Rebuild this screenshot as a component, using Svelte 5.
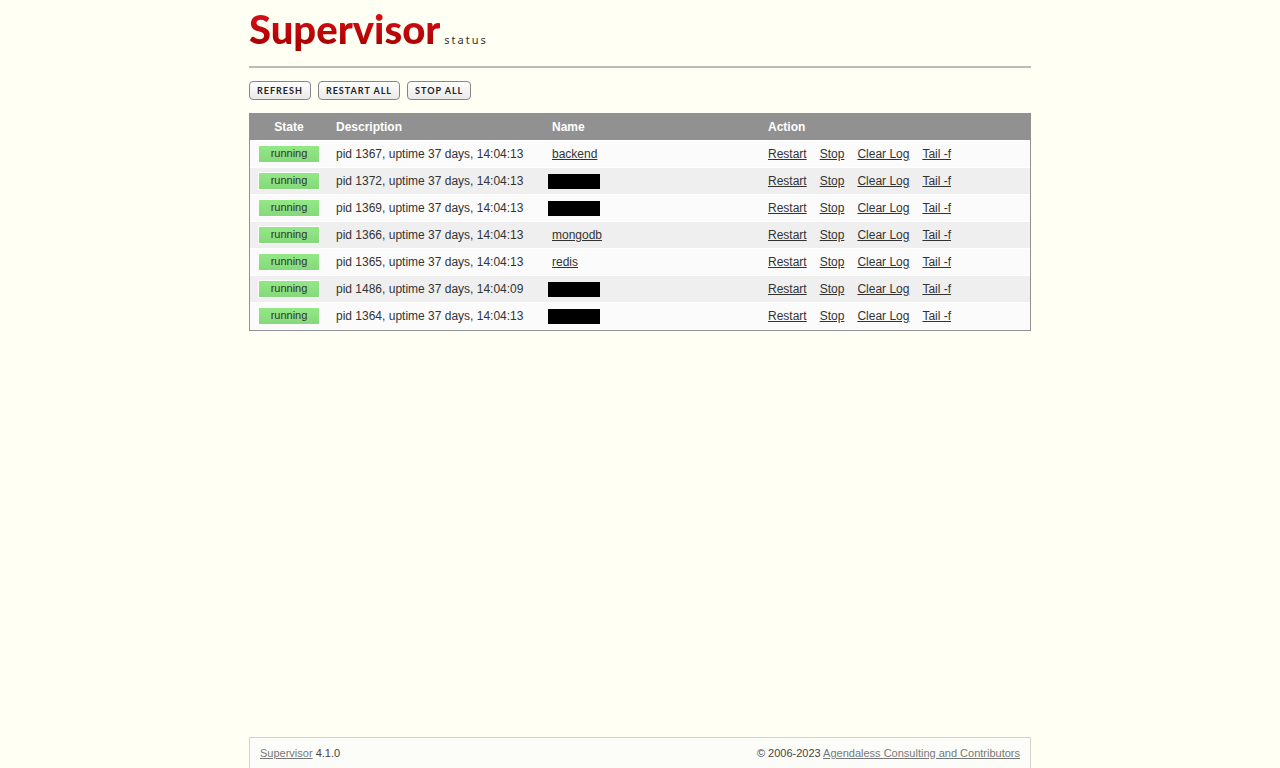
<script lang="ts">
	type Process = {
		pid: number;
		uptime: string;
		name: string;
	};

	const processes: Process[] = [
		{ pid: 1367, uptime: '37 days, 14:04:13', name: 'backend' },
		{ pid: 1372, uptime: '37 days, 14:04:13', name: '' },
		{ pid: 1369, uptime: '37 days, 14:04:13', name: '' },
		{ pid: 1366, uptime: '37 days, 14:04:13', name: 'mongodb' },
		{ pid: 1365, uptime: '37 days, 14:04:13', name: 'redis' },
		{ pid: 1486, uptime: '37 days, 14:04:09', name: '' },
		{ pid: 1364, uptime: '37 days, 14:04:13', name: '' }
	];

	const buttons = ['Refresh', 'Restart All', 'Stop All'];
	const actions = ['Restart', 'Stop', 'Clear Log', 'Tail -f'];
</script>

<div class="wrapper">
	<header>
		<h1>
			<span class="brand">Supervisor</span>
			<span class="sub">status</span>
		</h1>
	</header>

	<main>
		<div class="buttons">
			{#each buttons as label (label)}
				<button type="button">{label}</button>
			{/each}
		</div>

		<table>
			<thead>
				<tr>
					<th class="state">State</th>
					<th class="desc">Description</th>
					<th class="name">Name</th>
					<th>Action</th>
				</tr>
			</thead>
			<tbody>
				{#each processes as process (process.pid)}
					<tr>
						<td class="state"><span class="status">running</span></td>
						<td>pid {process.pid}, uptime {process.uptime}</td>
						<td>
							{#if process.name}
								<a href="#tail">{process.name}</a>
							{:else}
								<span class="redacted"></span>
							{/if}
						</td>
						<td>
							<div class="actions">
								{#each actions as action (action)}
									<a href="#action">{action}</a>
								{/each}
							</div>
						</td>
					</tr>
				{/each}
			</tbody>
		</table>
	</main>

	<footer>
		<div><a href="#supervisor">Supervisor</a> 4.1.0</div>
		<div>© 2006-2023 <a href="#agendaless">Agendaless Consulting and Contributors</a></div>
	</footer>
</div>

<style>
	:global(body) {
		background: #fffff3;
		font-family: 'Liberation Sans', Arial, sans-serif;
		font-size: 12px;
		color: #333;
	}

	.wrapper {
		box-sizing: border-box;
		display: flex;
		flex-direction: column;
		max-width: 782px;
		min-height: 100vh;
		margin: 0 auto;
	}

	header {
		height: 66px;
		border-bottom: 2px solid #bbb;
	}

	h1 {
		display: flex;
		align-items: baseline;
		gap: 4px;
		margin: 0;
		padding-top: 5px;
		line-height: 48px;
	}

	.brand {
		font-family: Lato, sans-serif;
		font-size: 40px;
		font-weight: 900;
		color: transparent;
		background: linear-gradient(#e0101a 10%, #a80000 85%);
		background-clip: text;
	}

	.sub {
		font-family: 'Noto Sans', sans-serif;
		font-size: 11px;
		font-weight: 400;
		letter-spacing: 2px;
	}

	main {
		flex: 1;
	}

	.buttons {
		display: flex;
		gap: 7px;
		margin: 13px 0;
	}

	button {
		height: 19px;
		padding: 0 7px;
		border: 1px solid #858585;
		border-radius: 4px;
		background: linear-gradient(#fff, #e9e9e9);
		font-family: Lato, sans-serif;
		font-size: 9px;
		font-weight: 700;
		line-height: 17px;
		letter-spacing: 1px;
		text-transform: uppercase;
		color: #222;
		cursor: pointer;
	}

	table {
		width: 100%;
		table-layout: fixed;
		border: 1px solid #919191;
		border-spacing: 0;
	}

	th,
	td {
		box-sizing: border-box;
		padding: 0 8px;
		text-align: left;
	}

	th {
		height: 26px;
		background: #919191;
		color: #fff;
	}

	td {
		height: 27px;
		border-top: 1px solid #fff;
		background: #fbfbfb;
	}

	tbody tr:nth-child(even) td {
		background: #efefef;
	}

	tbody tr:last-child td {
		height: 28px;
		border-bottom: 1px solid #fff;
	}

	th.state,
	td.state {
		width: 78px;
		text-align: center;
	}

	.desc,
	.name {
		width: 216px;
	}

	.status {
		display: block;
		height: 16px;
		border: 1px solid #fff;
		background: linear-gradient(#93e886, #85d97a);
		font-size: 11px;
		line-height: 14px;
	}

	.redacted {
		display: block;
		width: 52px;
		height: 15px;
		margin-left: -4px;
		background: #000;
	}

	a {
		color: inherit;
	}

	.actions {
		display: flex;
		gap: 13px;
	}

	footer {
		display: flex;
		justify-content: space-between;
		padding: 8px 10px;
		border: 1px solid #d3d3cc;
		border-bottom: 0;
		background: #fcfdf8;
		font-size: 11px;
		line-height: 14px;
		color: #444;
	}

	footer a {
		color: #777;
	}
</style>
